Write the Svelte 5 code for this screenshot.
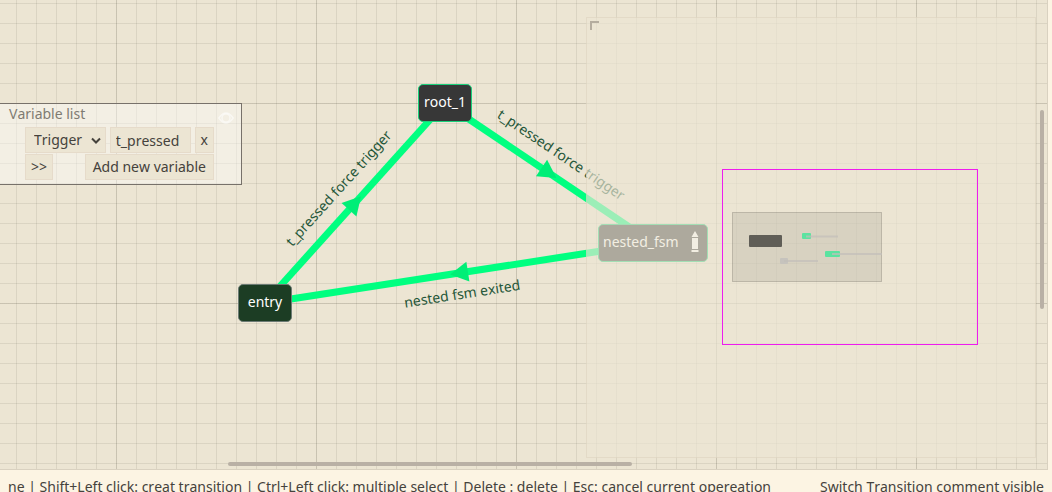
<script>
  const edges = [
    { from: [265, 303], to: [445, 103], label: 't_pressed force trigger', side: -17 },
    { from: [445, 103], to: [653, 243], label: 't_pressed force trigger', side: -17 },
    { from: [653, 243], to: [265, 303], label: 'nested fsm exited', side: 26 },
  ].map((e) => {
    const dx = e.to[0] - e.from[0];
    const dy = e.to[1] - e.from[1];
    const angle = (Math.atan2(dy, dx) * 180) / Math.PI;
    return {
      ...e,
      mx: (e.from[0] + e.to[0]) / 2,
      my: (e.from[1] + e.to[1]) / 2,
      angle,
      textAngle: dx < 0 ? angle - 180 : angle,
    };
  });

  let kind = $state('Trigger');
  let name = $state('t_pressed');
</script>

<div class="app">
  <main class="graph">
    <svg class="edges" aria-hidden="true">
      {#each edges as e}
        <line class="edge" x1={e.from[0]} y1={e.from[1]} x2={e.to[0]} y2={e.to[1]} />
        <polygon class="arrow" points="9,0 -9,-10 -9,10" transform="translate({e.mx} {e.my}) rotate({e.angle})" />
        <text class="edge-label" y={e.side} transform="translate({e.mx} {e.my}) rotate({e.textAngle})">{e.label}</text>
      {/each}
    </svg>

    <div class="node root">root_1</div>
    <div class="node entry">entry</div>
    <div class="node nested">
      <span>nested_fsm</span>
      <svg width="8" height="22" viewBox="0 0 8 22" aria-hidden="true">
        <path d="M4 0 7.500 6H.5zM1 7h6v11H1zM.5 19h7v2H.5z" fill="#fff" />
      </svg>
    </div>

    <section class="variables">
      <header>
        <span>Variable list</span>
        <svg width="16" height="12" viewBox="0 0 16 12" aria-hidden="true">
          <path d="M.8 6Q8-4 15.200 6Q8 16 .8 6z" />
          <circle cx="8" cy="6" r="4" />
        </svg>
      </header>
      <div class="row">
        <span class="select">
          <select aria-label="Variable type" bind:value={kind}>
            <option>Trigger</option>
          </select>
          <svg width="10" height="7" viewBox="0 0 10 7" aria-hidden="true"><path d="M1 1.500 5 5.500 9 1.500" /></svg>
        </span>
        <input aria-label="Variable name" bind:value={name} />
        <button type="button">x</button>
      </div>
      <div class="row spread">
        <button type="button">&gt;&gt;</button>
        <button type="button" class="add">Add new variable</button>
      </div>
    </section>

    <aside class="minimap">
      <svg class="grip" width="9" height="9" aria-hidden="true"><path d="M1 9V1H9" /></svg>
      <svg class="map" width="256" height="176" aria-hidden="true">
        <rect x="10.500" y="43.500" width="149" height="69" fill="#646055" fill-opacity=".14" stroke="#646055" stroke-opacity=".3" />
        <rect x="27" y="66" width="33" height="12" rx="1" fill="#605e57" />
        <rect x="80" y="64" width="9" height="6" rx="1" fill="#5be3a0" />
        <rect x="103" y="82" width="15" height="6" rx="1" fill="#5be3a0" />
        <rect x="58" y="89" width="8" height="6" rx="1" fill="#c6c3bd" />
        <path d="M84 67.500h32M110 85h50M62 92h34" stroke="#c3bfba" stroke-width="2" opacity=".7" />
        <rect x=".5" y=".5" width="255" height="175" fill="none" stroke="#ee1cee" />
      </svg>
    </aside>

    <div class="thumb vertical"></div>
    <div class="thumb horizontal"></div>
  </main>

  <footer>
    <span>ne | Shift+Left click: creat transition | Ctrl+Left click: multiple select | Delete : delete | Esc: cancel current opereation</span>
    <span>Switch Transition comment visible</span>
  </footer>
</div>

<style>
  :global(body) {
    margin: 0;
    overflow: hidden;
    background: #fcf4e3;
  }
  .app {
    display: flex;
    flex-direction: column;
    height: 100vh;
    overflow: hidden;
    font: 14px/18px "Noto Sans", sans-serif;
    font-kerning: none;
    color: #45423c;
  }
  .graph {
    position: relative;
    flex: 1;
    min-height: 0;
    margin-right: 4px;
    box-sizing: border-box;
    border: solid #d9d1c0;
    border-width: 0 1px 1px 0;
    overflow: hidden;
    background-color: #ece5d3;
    background-image:
      linear-gradient(90deg, rgba(80, 74, 60, .13) 1px, transparent 1px),
      linear-gradient(rgba(80, 74, 60, .13) 1px, transparent 1px),
      linear-gradient(90deg, rgba(80, 74, 60, .11) 1px, transparent 1px),
      linear-gradient(rgba(80, 74, 60, .11) 1px, transparent 1px);
    background-size: 200px 200px, 200px 200px, 20px 20px, 20px 20px;
    background-position: 116px 103px, 116px 103px, 16px 3px, 16px 3px;
  }
  .edges {
    position: absolute;
    inset: 0;
    width: 100%;
    height: 100%;
  }
  .edge {
    stroke: #00ff80;
    stroke-width: 7px;
  }
  .arrow {
    fill: #00ee77;
  }
  .edge-label {
    fill: #245638;
    text-anchor: middle;
  }
  .node {
    position: absolute;
    display: flex;
    align-items: center;
    justify-content: center;
    box-sizing: border-box;
    height: 38px;
    padding-bottom: 3px;
    border: 1px solid #19d07a;
    border-radius: 5px;
    background: #373737;
    color: #fff;
  }
  .root {
    left: 418px;
    top: 84px;
    width: 54px;
  }
  .entry {
    left: 238px;
    top: 284px;
    width: 54px;
    border-color: #6c7b74;
    background: #1c3d24;
  }
  .nested {
    left: 598px;
    top: 224px;
    width: 110px;
    justify-content: space-between;
    padding: 0 8px 2px 4px;
  }
  .variables {
    position: absolute;
    left: -1px;
    top: 103px;
    box-sizing: border-box;
    width: 243px;
    height: 82px;
    padding: 0 27px 0 25px;
    border: 1px solid #77716a;
    background: rgba(255, 255, 255, .4);
  }
  header {
    display: flex;
    justify-content: space-between;
    height: 23px;
    margin: 0 -20px 0 -16px;
    line-height: 20px;
    color: #7f7b72;
  }
  header svg {
    margin-top: 8px;
    fill: none;
    stroke: #fff;
    stroke-opacity: .55;
    stroke-width: 1.500px;
  }
  .row {
    display: grid;
    grid-template-columns: 1fr 1fr auto;
    gap: 4px;
    margin-bottom: 1px;
  }
  .spread {
    display: flex;
    justify-content: space-between;
  }
  button,
  input,
  select {
    box-sizing: border-box;
    height: 26px;
    min-width: 0;
    margin: 0;
    padding: 0 5px;
    border: 1px solid #e6dbca;
    border-radius: 0;
    background: #ece5d3;
    font: inherit;
    color: inherit;
  }
  .add {
    padding: 0 7px;
  }
  .select {
    position: relative;
    display: flex;
  }
  select {
    appearance: none;
    width: 100%;
    padding-left: 8px;
  }
  .select svg {
    position: absolute;
    right: 5px;
    top: 10px;
    fill: none;
    stroke: #45423c;
    stroke-width: 2px;
    pointer-events: none;
  }
  .minimap {
    position: absolute;
    top: 17px;
    right: 11px;
    bottom: 11px;
    box-sizing: border-box;
    width: 450px;
    display: flex;
    align-items: center;
    padding: 38px 0 0 135px;
    border: 1px solid rgba(200, 188, 165, .25);
    background: rgba(236, 229, 211, .66);
  }
  .grip {
    position: absolute;
    left: 3px;
    top: 3px;
    fill: none;
    stroke: #b5ad9f;
    stroke-width: 2px;
  }
  .thumb {
    position: absolute;
    border-radius: 2px;
    background: #b9b0a5;
  }
  .vertical {
    right: 3px;
    top: 110px;
    width: 4px;
    height: 199px;
  }
  .horizontal {
    left: 228px;
    bottom: 3px;
    width: 404px;
    height: 4px;
  }
  footer {
    display: flex;
    justify-content: space-between;
    gap: 30px;
    height: 14px;
    padding: 8px 8px 0;
    overflow: hidden;
    white-space: nowrap;
  }
</style>
